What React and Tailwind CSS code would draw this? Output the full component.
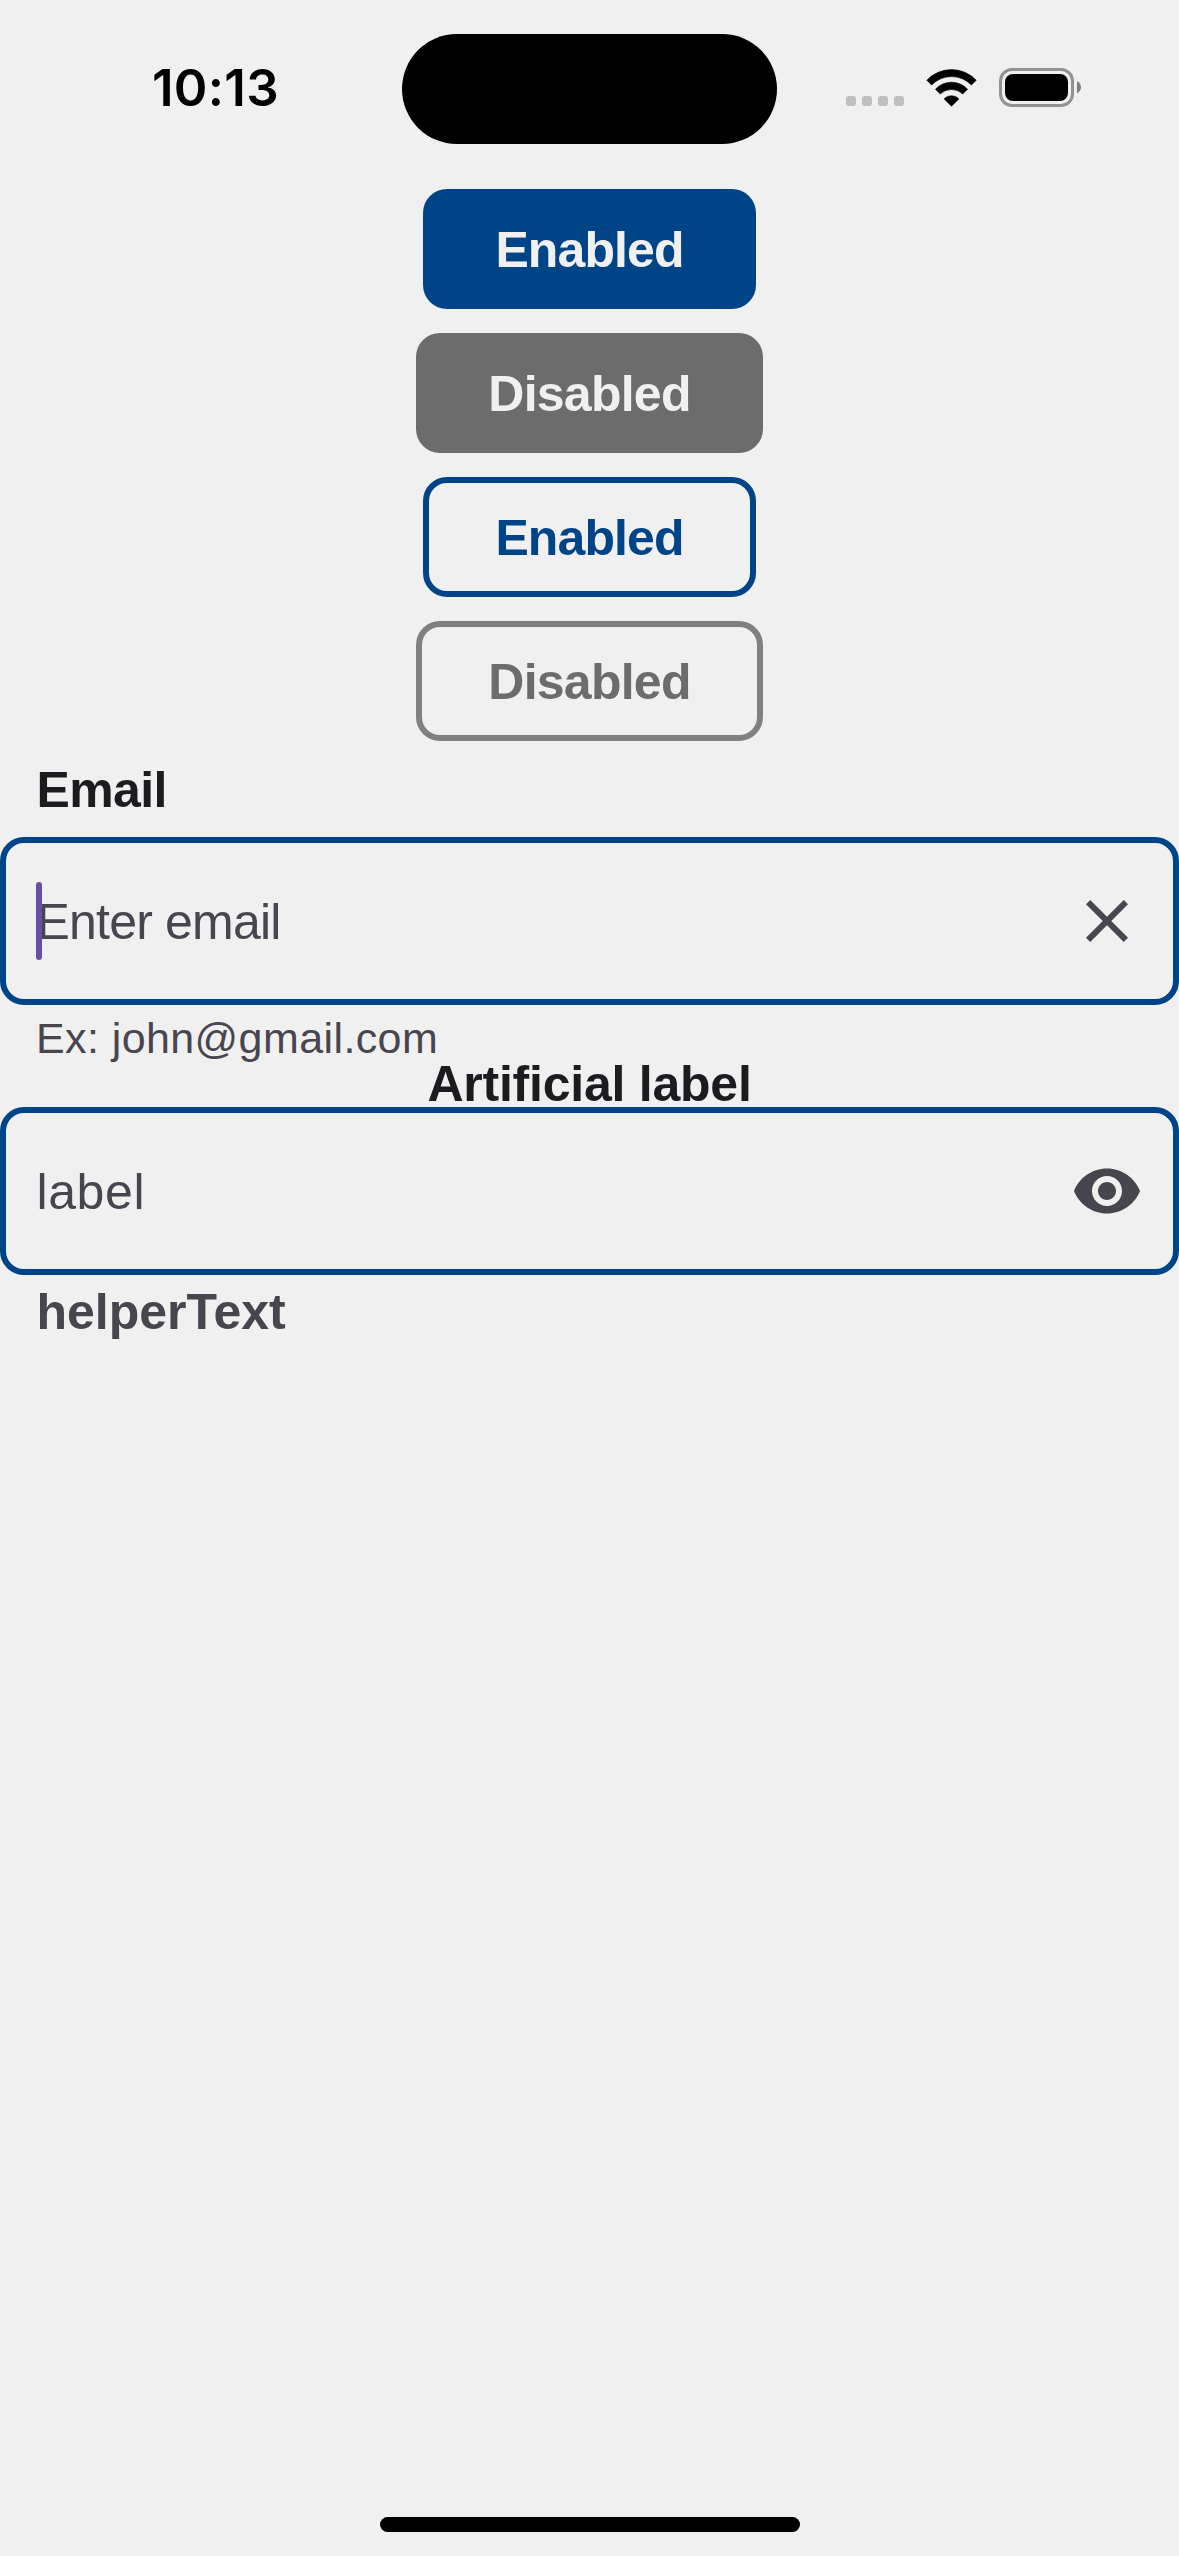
import React from "react";

function WifiIcon() {
  return (
    <svg className="ml-[22px] h-[38px] w-[51px]" viewBox="0 0 51 38" fill="#000">
      <path d="M.8 11.2A34 34 0 0 1 50.2 11.2L45.4 16A27.8 27.8 0 0 0 5.6 16Z" stroke="#000" strokeWidth=".6" strokeLinejoin="round" />
      <path d="M9.4 20.2A22 22 0 0 1 41.6 20.2L36.7 25.1A15.9 15.9 0 0 0 14.3 25.1Z" stroke="#000" strokeWidth=".6" strokeLinejoin="round" />
      <path d="M18.1 29.9A10 10 0 0 1 32.9 29.9L25.5 37.3Z" stroke="#000" strokeWidth=".5" strokeLinejoin="round" />
    </svg>
  );
}

function BatteryIcon() {
  return (
    <svg className="ml-[22px] h-[39px] w-[82px]" viewBox="0 0 82 39">
      <rect x="1.5" y="1.5" width="72" height="36" rx="11.5" fill="none" stroke="#929292" strokeWidth="3" />
      <rect x="6" y="6" width="63" height="27" rx="8" fill="#000" />
      <path d="M78 13.2C80.5 14.2 82 16.6 82 19.2C82 21.8 80.5 24.2 78 25.2Z" fill="#808080" />
    </svg>
  );
}

function StatusBar() {
  return (
    <header className="flex h-[175px] shrink-0 items-center">
      <div className="w-[402px] pl-[152px] font-['Inter',sans-serif] text-[51px] font-semibold leading-none tracking-[0.3px] text-black">
        10:13
      </div>
      <div className="mt-[2.5px] h-[110px] w-[375px] rounded-full bg-black" />
      <div className="ml-[69px] mt-[27px] flex gap-1.5">
        {[0, 1, 2, 3].map((dot) => (
          <span key={dot} className="size-[10px] rounded-[3px] bg-[#bfbfbf]" />
        ))}
      </div>
      <WifiIcon />
      <BatteryIcon />
    </header>
  );
}

function Button({ className, children, ...props }) {
  return (
    <button
      className={`flex h-[120px] items-center justify-center rounded-[24px] pt-0.5 text-[50px] font-bold leading-none ${className}`}
      {...props}
    >
      {children}
    </button>
  );
}

function Field({ className, placeholder, focused, icon }) {
  return (
    <div className="flex h-[168px] shrink-0 items-center justify-between rounded-[24px] border-6 border-[#004488] px-[30px]">
      <div className="relative flex items-center">
        <span className={`pt-0.5 text-[50px] leading-none ${className}`}>{placeholder}</span>
        {focused && <span className="absolute left-0 h-[78px] w-1.5 rounded-full bg-[#6750A4]" />}
      </div>
      <svg className="size-[72px]" viewBox="0 0 24 24" fill="#49454F">
        <path d={icon} />
      </svg>
    </div>
  );
}

const closeIcon =
  "M19 6.41 17.59 5 12 10.59 6.41 5 5 6.41 10.59 12 5 17.59 6.41 19 12 13.41 17.59 19 19 17.59 13.41 12z";
const eyeIcon =
  "M12 4.5C7 4.5 2.73 7.61 1 12c1.73 4.39 6 7.5 11 7.5s9.27-3.11 11-7.5c-1.73-4.39-6-7.5-11-7.5zM12 17c-2.76 0-5-2.24-5-5s2.24-5 5-5 5 2.24 5 5-2.24 5-5 5zm0-8c-1.66 0-3 1.34-3 3s1.34 3 3 3 3-1.34 3-3-1.34-3-3-3z";

export default function App() {
  return (
    <div className="flex h-[2556px] w-[1179px] flex-col overflow-hidden bg-[#f0f0f0] font-['Liberation_Sans',Arial,sans-serif]">
      <StatusBar />
      <main className="flex flex-1 flex-col pt-3.5">
        <div className="flex shrink-0 flex-col items-center gap-6">
          <Button className="w-[333px] bg-[#004488] tracking-[-0.9px] text-[#f0f0f0]">Enabled</Button>
          <Button className="w-[347px] bg-[#6c6c6c] tracking-[-0.75px] text-[#f0f0f0]" disabled>
            Disabled
          </Button>
          <Button className="w-[333px] border-6 border-[#004488] tracking-[-0.9px] text-[#004488]">Enabled</Button>
          <Button className="w-[347px] border-6 border-[#808080] tracking-[-0.75px] text-[#6c6c6c]" disabled>
            Disabled
          </Button>
        </div>
        <label className="flex h-24 shrink-0 items-center pl-[36.5px] pt-0.5 text-[50px] font-bold leading-none tracking-[-0.65px] text-[#1D1B20]">
          Email
        </label>
        <Field placeholder="Enter email" className="pl-[0.5px] tracking-[-0.8px] text-[#49454F]" focused icon={closeIcon} />
        <p className="h-[57px] shrink-0 pl-9 text-[43px] leading-[66px] tracking-[0.4px] text-[#49454F]">
          Ex: john@gmail.com
        </p>
        <label className="h-[45px] shrink-0 text-center text-[50px] font-bold leading-[44px] tracking-[-0.23px] text-[#1D1B20]">
          Artificial label
        </label>
        <Field placeholder="label" className="pl-[0.5px] tracking-[0.6px] text-[#49454F]" icon={eyeIcon} />
        <p className="shrink-0 pl-[36.5px] text-[50px] font-bold leading-[74px] text-[#49454F]">helperText</p>
      </main>
      <div className="mb-6 h-[15px] w-[420px] shrink-0 self-center rounded-full bg-black" />
    </div>
  );
}
